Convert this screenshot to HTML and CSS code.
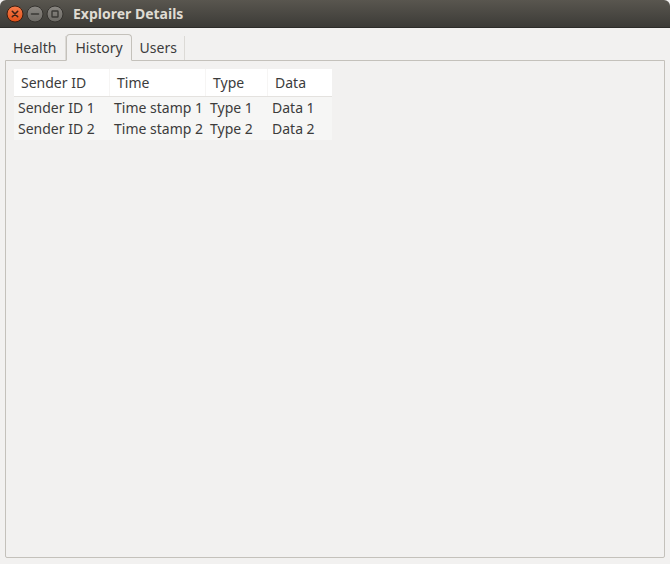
FILE: index.html
```html
<!DOCTYPE html>
<html>
<head>
<meta charset="utf-8">
<link rel="stylesheet" href="styles.css">
</head>
<body>
<div class="window">
  <div class="titlebar">
    <div class="controls">
      <svg class="btn" width="18" height="18" viewBox="0 0 18 18">
        <defs>
          <linearGradient id="gc" x1="0" y1="0" x2="0" y2="1">
            <stop offset="0" stop-color="#f77c4b"/>
            <stop offset="1" stop-color="#df4f17"/>
          </linearGradient>
        </defs>
        <circle cx="9" cy="9" r="8" fill="url(#gc)" stroke="#3a1f12" stroke-width="1"/>
        <path d="M6.3 6.3 L11.7 11.7 M11.7 6.3 L6.3 11.7" stroke="#3b2116" stroke-width="1.6" stroke-linecap="round"/>
      </svg>
      <svg class="btn" width="18" height="18" viewBox="0 0 18 18">
        <defs>
          <linearGradient id="gg" x1="0" y1="0" x2="0" y2="1">
            <stop offset="0" stop-color="#8a8782"/>
            <stop offset="1" stop-color="#6b6964"/>
          </linearGradient>
        </defs>
        <circle cx="9" cy="9" r="8" fill="url(#gg)" stroke="#35332f" stroke-width="1"/>
        <path d="M5.5 9 L12.5 9" stroke="#3a3935" stroke-width="1.6" stroke-linecap="round"/>
      </svg>
      <svg class="btn" width="18" height="18" viewBox="0 0 18 18">
        <circle cx="9" cy="9" r="8" fill="url(#gg)" stroke="#35332f" stroke-width="1"/>
        <rect x="6" y="6" width="6" height="6" rx="0.5" fill="none" stroke="#3a3935" stroke-width="1.4"/>
      </svg>
    </div>
    <div class="title">Explorer Details</div>
  </div>
  <div class="body">
    <div class="tabs">
      <div class="tab">Health</div>
      <div class="tab active">History</div>
      <div class="tab">Users</div>
    </div>
    <div class="panel">
      <div class="table">
        <div class="thead">
          <div class="th c1">Sender ID</div>
          <div class="th c2">Time</div>
          <div class="th c3">Type</div>
          <div class="th c4">Data</div>
        </div>
        <div class="tbody">
          <div class="tr">
            <div class="td c1">Sender ID 1</div>
            <div class="td c2">Time stamp 1</div>
            <div class="td c3">Type 1</div>
            <div class="td c4">Data 1</div>
          </div>
          <div class="tr">
            <div class="td c1">Sender ID 2</div>
            <div class="td c2">Time stamp 2</div>
            <div class="td c3">Type 2</div>
            <div class="td c4">Data 2</div>
          </div>
        </div>
      </div>
    </div>
  </div>
</div>
</body>
</html>
```
FILE: styles.css
```css
html, body {
  margin: 0;
  padding: 0;
  background: #f2f1f0;
}
body {
  font-family: "Noto Sans", "Open Sans", sans-serif;
  font-size: 14px;
  color: #3c3c3c;
}
.window {
  width: 670px;
  height: 564px;
  display: flex;
  flex-direction: column;
  background: #f2f1f0;
}
.titlebar {
  height: 28px;
  flex: none;
  display: flex;
  align-items: center;
  background: linear-gradient(#59564f, #3c3b37);
  border-radius: 6px 6px 0 0;
  border-bottom: 1px solid #2d2c29;
  box-sizing: border-box;
}
.controls {
  display: flex;
  gap: 1px;
  margin-left: 6px;
  align-items: center;
  padding-top: 1px;
}
.btn {
  display: block;
  margin-right: 1px;
}
.title {
  margin-left: 8px;
  color: #dfdbd2;
  font-weight: bold;
  font-size: 14px;
  padding-bottom: 1px;
}
.body {
  flex: 1;
  display: flex;
  flex-direction: column;
  padding: 6px 5px 6px 5px;
}
.tabs {
  display: flex;
  align-items: flex-end;
  height: 26px;
  margin-left: 1px;
  position: relative;
  z-index: 1;
}
.tab {
  height: 24px;
  line-height: 23px;
  padding: 0 8px 0 8px;
  box-sizing: border-box;
  border-right: 1px solid #dcdad6;
  color: #3c3c3c;
}
.tab:first-child {
  padding-left: 7px;
  padding-right: 9px;
}
.tab.active {
  height: 27px;
  line-height: 25px;
  padding: 0 8px;
  border: 1px solid #c4c1bb;
  border-bottom: 1px solid #f2f1f0;
  border-radius: 4px 4px 0 0;
  background: #f2f1f0;
  margin-bottom: -1px;
}
.tab:last-child {
  padding-right: 7px;
}
.panel {
  flex: 1;
  border: 1px solid #c4c1bb;
  border-radius: 0 0 2px 2px;
  padding: 8px 8px;
  background: #f2f1f0;
}
.table {
  width: 318px;
}
.thead {
  display: flex;
  height: 27px;
  background: #ffffff;
  border-bottom: 1px solid #e4e2df;
  box-sizing: content-box;
}
.th {
  line-height: 27px;
  padding-left: 7px;
  box-sizing: border-box;
  border-right: 1px solid #f6f5f4;
}
.th.c4 { border-right: none; }
.tbody {
  background: #f6f6f5;
  padding: 0 0 1px;
}
.tr {
  display: flex;
  height: 21px;
  line-height: 21px;
}
.td {
  padding-left: 4px;
  box-sizing: border-box;
  white-space: nowrap;
}
.c1 { width: 96px; }
.c2 { width: 96px; }
.c3 { width: 62px; }
.c4 { width: 64px; }
```
